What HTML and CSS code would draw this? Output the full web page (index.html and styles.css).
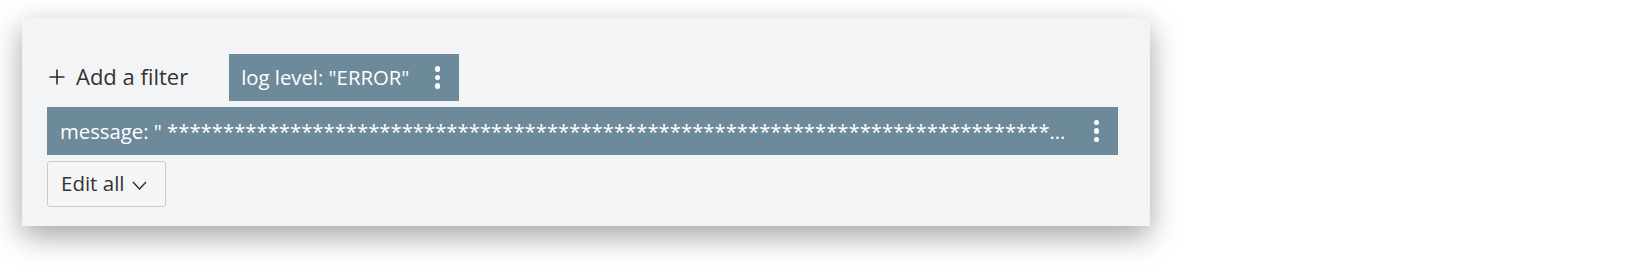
FILE: index.html
```html
<!DOCTYPE html>
<html>
<head>
<meta charset="utf-8">
<link rel="stylesheet" href="styles.css">
</head>
<body>
<div class="panel">
  <div class="row first">
    <button class="add">
      <svg class="plus" width="16" height="16" viewBox="0 0 16 16"><path d="M8 0.5v15M0.5 8h15" stroke="#2b2b2b" stroke-width="1.6" fill="none"/></svg>
      <span>Add a filter</span>
    </button>
    <div class="pill small">
      <span class="label">log level: "ERROR"</span>
      <span class="kebab"><i></i><i></i><i></i></span>
    </div>
  </div>
  <div class="pill wide">
    <span class="label">message: " ************************************************************************************************************************************************************************</span>
    <span class="kebab"><i></i><i></i><i></i></span>
  </div>
  <div class="row">
    <button class="edit"><span>Edit all</span>
      <svg class="chev" width="15" height="9" viewBox="0 0 15 9"><path d="M1 1l6.5 7 6.5-7" stroke="#333" stroke-width="1.5" fill="none"/></svg>
    </button>
  </div>
</div>
</body>
</html>
```
FILE: styles.css
```css
html, body { margin: 0; padding: 0; background: #fff; }
html { height: 100%; }
body { min-height: 100%; box-sizing: border-box; padding: 18px 0 0 22px; font-family: "Open Sans", "Liberation Sans", sans-serif; }
.panel {
  width: 1128px;
  height: 208px;
  box-sizing: border-box;
  background: #f3f4f6;
  padding: 36px 32px 19px 25px;
  display: flex;
  flex-direction: column;
  gap: 6px;
  box-shadow: 0 10px 28px rgba(0,0,0,0.36);
}
.row { display: flex; align-items: center; }
.add {
  display: flex; align-items: center; gap: 11px;
  background: none; border: none; padding: 0 0 3px 2px; margin-right: 41px;
  font: inherit; font-size: 22px; color: #333; height: 47px; cursor: pointer;
  box-sizing: border-box;
}
.plus { display: block; margin-top: 2px; }
.pill {
  background: #6d8a9b;
  color: #fff;
  box-sizing: border-box;
  display: flex; align-items: center;
  font-size: 20.3px;
}
.pill.small { width: 230px; height: 47px; padding: 0 19px 1px 12px; justify-content: space-between; }
.pill.wide { height: 48px; padding: 0 19px 1px 13px; gap: 23px; }
.pill .label { white-space: nowrap; overflow: hidden; text-overflow: ellipsis; min-width: 0; flex: 1; line-height: 30px; }
.pill.small .label { flex: none; }
.kebab { display: flex; flex-direction: column; gap: 3px; flex: none; margin-top: 1px; }
.kebab i { display: block; width: 5.5px; height: 5.5px; border-radius: 50%; background: #fff; }
.edit {
  height: 46px; width: 119px; box-sizing: border-box;
  border: 1px solid #c9cacc; border-radius: 3px; background: #f5f5f6;
  font: inherit; font-size: 20.5px; color: #333;
  display: flex; align-items: center; gap: 8px; padding: 0 0 3px 13px;
}
.chev { display: block; margin-top: 5px; }
```
